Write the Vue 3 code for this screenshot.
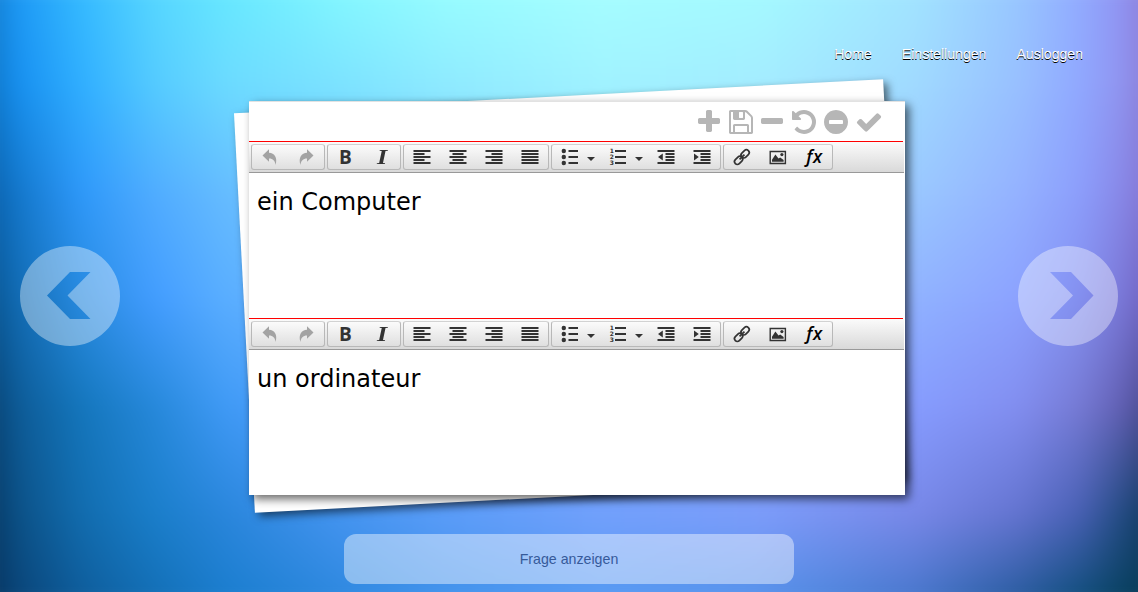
<script setup>
const stops = [0, 40, 100, 170, 240, 350, 450, 600, 750, 900, 1000, 1060, 1100, 1138]
const mesh = [
  [0, '#0f74c4 #1f9cf8 #36bcff #56d8ff #66eaff #84faff #98ffff #a6ffff #a4fcff #a2e6ff #98c8ff #92acff #9094f4 #8c74cc'],
  [100, '#096cb8 #1890f0 #30aeff #54caff #6cdaff #7ce2ff #8eeaff #a0f2ff #a4ecff #a0daff #98c0ff #90a8ff #9094f0 #8874cc'],
  [200, '#0658a0 #1478cc #2e98fa #50acff #66bcff #74c8ff #84d0ff #94d8ff #9cd8ff #9ac8ff #94b2ff #8c9efc #8888e8 #806cc8'],
  [300, '#054c84 #126cb4 #288adf #429cff #5aaeff #66b0ff #74b8ff #84c0ff #90c0ff #90b2ff #8ca2ff #8490f0 #7a78d8 #6858b4'],
  [400, '#053864 #0e5c98 #1476bc #2688da #409af6 #54a0ff #64a4ff #78a8ff #84a8ff #869cff #828ef0 #767ad4 #6260b4 #3c407c'],
  [500, '#053058 #0c5288 #126cae #1a7eca #2a86dc #4494f0 #5a9cf8 #72a0fc #7c9cfa #7888e8 #6474d0 #4860b4 #244c84 #0a3454'],
  [592, '#062c54 #0a4478 #0e5a98 #126cb2 #187ccc #2a86dc #3c90e8 #5098f0 #5090e8 #4074c8 #205898 #084c74 #04405c #043850'],
]
const layers = mesh.map(([y, colors], i) => {
  const list = colors.split(' ').map((c, k) => `${c} ${stops[k]}px`).join(', ')
  const style = { backgroundImage: `linear-gradient(to right, ${list})` }
  if (i > 0) style.maskImage = `linear-gradient(to bottom, transparent ${mesh[i - 1][0]}px, #000 ${y}px)`
  return style
})

const actions = [
  { name: 'Neu', d: 'M1600 736v192q0 40-28 68t-68 28h-416v416q0 40-28 68t-68 28h-192q-40 0-68-28t-28-68v-416h-416q-40 0-68-28t-28-68v-192q0-40 28-68t68-28h416v-416q0-40 28-68t68-28h192q40 0 68 28t28 68v416h416q40 0 68 28t28 68z' },
  { name: 'Speichern', d: 'M512 1536h768v-384h-768v384zm896 0h128v-896q0-14-10-38.5t-20-34.5l-281-281q-10-10-34-20t-39-10v416q0 40-28 68t-68 28h-576q-40 0-68-28t-28-68v-416h-128v1280h128v-416q0-40 28-68t68-28h832q40 0 68 28t28 68v416zm-384-928v-320q0-13-9.500-22.500t-22.500-9.500h-192q-13 0-22.500 9.500t-9.500 22.500v320q0 13 9.500 22.500t22.500 9.500h192q13 0 22.500-9.500t9.500-22.500zm640 32v928q0 40-28 68t-68 28h-1344q-40 0-68-28t-28-68v-1344q0-40 28-68t68-28h928q40 0 88 20t76 48l280 280q28 28 48 76t20 88z' },
  { name: 'Entfernen', d: 'M1600 736v192q0 40-28 68t-68 28h-1216q-40 0-68-28t-28-68v-192q0-40 28-68t68-28h1216q40 0 68 28t28 68z' },
  { name: 'Zurücksetzen', d: 'M1664 896q0 156-61 298t-164 245-245 164-298 61q-172 0-327-72.500t-264-204.500q-7-10-6.500-22.500t8.500-20.500l137-138q10-9 25-9 16 2 23 12 73 95 179 147t225 52q104 0 198.500-40.500t163.500-109.500 109.500-163.500 40.500-198.500-40.500-198.500-109.500-163.500-163.500-109.500-198.500-40.500q-98 0-188 35.500t-160 101.500l137 138q31 30 14 69-17 40-59 40h-448q-26 0-45-19t-19-45v-448q0-42 40-59 39-17 69 14l130 129q107-101 244.500-156.500t284.500-55.500q156 0 298 61t245 164 164 245 61 298z' },
  { name: 'Sperren', d: 'M1344 960v-128q0-26-19-45t-45-19h-768q-26 0-45 19t-19 45v128q0 26 19 45t45 19h768q26 0 45-19t19-45zm320-64q0 209-103 385.500t-279.500 279.500-385.500 103-385.500-103-279.500-279.500-103-385.500 103-385.500 279.500-279.500 385.500-103 385.500 103 279.500 279.500 103 385.500z' },
  { name: 'Fertig', d: 'M1671 566q0 40-28 68l-724 724-136 136q-28 28-68 28t-68-28l-136-136-362-362q-28-28-28-68t28-68l136-136q28-28 68-28t68 28l294 295 656-657q28-28 68-28t68 28l136 136q28 28 28 68z' },
]

const arrow = 'M1.500 6.500 8 .3V3.800C13.500 4.100 16.800 8.500 14.600 16 14 11.800 12 9.600 8 9.600V12.700Z'
const groups = [
  [{ id: 'undo', d: arrow, off: true }, { id: 'redo', d: arrow, off: true, flip: true }],
  [{ id: 'bold', text: 'B' }, { id: 'italic', text: 'I' }],
  [
    { id: 'left', d: 'M.5 1h17v2H.5zM.5 4h11v2H.5zM.5 7h17v2H.5zM.5 10h11v2H.5zM.5 13h17v2H.5z' },
    { id: 'center', d: 'M.5 1h17v2H.5zM3.500 4h11v2h-11zM.5 7h17v2H.5zM3.500 10h11v2h-11zM.5 13h17v2H.5z' },
    { id: 'right', d: 'M.5 1h17v2H.5zM6.500 4h11v2h-11zM.5 7h17v2H.5zM6.500 10h11v2h-11zM.5 13h17v2H.5z' },
    { id: 'justify', d: 'M.5 1h17v2H.5zM.5 4h17v2H.5zM.5 7h17v2H.5zM.5 10h17v2H.5zM.5 13h17v2H.5z' },
  ],
  [
    { id: 'ul', d: 'M7.500 1h9.500v2H7.500zM7.500 7h9.500v2H7.500zM7.500 13h9.500v2H7.500zM.6 2a2.200 2.200 0 1 0 4.400 0a2.200 2.200 0 1 0-4.400 0M.6 8a2.200 2.200 0 1 0 4.400 0a2.200 2.200 0 1 0-4.400 0M.6 14a2.200 2.200 0 1 0 4.400 0a2.200 2.200 0 1 0-4.400 0', menu: true },
    { id: 'ol', d: 'M6 1h11v2H6zM6 7h11v2H6zM6 13h11v2H6z', menu: true },
    { id: 'outdent', d: 'M.5 1h17v2H.5zM8.500 4h9v2h-9zM8.500 7h9v2h-9zM8.500 10h9v2h-9zM.5 13h17v2H.5zM1 8l4.800-3.500v7z' },
    { id: 'indent', d: 'M.5 1h17v2H.5zM7.500 4h10v2h-10zM7.500 7h10v2h-10zM7.500 10h10v2h-10zM.5 13h17v2H.5zM5.800 8 1 4.500v7z' },
  ],
  [{ id: 'link' }, { id: 'image' }, { id: 'formula', text: 'fx' }],
]
const editors = ['ein Computer', 'un ordinateur']
</script>

<template>
  <div class="page">
    <div class="backdrop">
      <div v-for="(layer, i) in layers" :key="i" class="layer" :style="layer"></div>
    </div>

    <nav class="nav">
      <a>Home</a><a>Einstellungen</a><a>Ausloggen</a>
    </nav>

    <main class="stage">
      <svg class="turn" viewBox="0 0 100 100">
        <path fill-rule="evenodd" d="M50 0a50 50 0 1 0 0 100a50 50 0 1 0 0-100zM50 26h20.500L47.500 49.500 70.500 73H50L27 49.500z" />
      </svg>

      <section class="card">
        <div class="sheet"></div>
        <div class="face">
          <header class="actions">
            <svg v-for="a in actions" :key="a.name" viewBox="0 0 1792 1792" :aria-label="a.name"><path :d="a.d" /></svg>
          </header>
          <div v-for="t in editors" :key="t" class="editor">
            <div class="toolbar">
              <div v-for="(g, i) in groups" :key="i" class="group">
                <div v-for="b in g" :key="b.id" class="btn" :class="{ off: b.off, menu: b.menu }">
                  <span v-if="b.text" :class="['letter', b.id]">{{ b.text }}</span>
                  <svg v-else-if="b.id === 'link'" class="icon" viewBox="0 0 18 16">
                    <g fill="none" stroke="#333" stroke-width="1.700" transform="rotate(-45 9 8)">
                      <rect x="-.4" y="5.200" width="9.200" height="5.600" rx="2.800" />
                      <rect x="8.800" y="5.200" width="9.200" height="5.600" rx="2.800" />
                      <path d="M5.500 8h7" />
                    </g>
                  </svg>
                  <svg v-else-if="b.id === 'image'" class="icon" viewBox="0 0 18 16">
                    <path fill="none" stroke="#333" stroke-width="1.400" d="M1.200 2.500h15.200v12H1.200z" />
                    <path d="M3 12.700V10.800L6.400 5.400l3.100 4.200 1.700-1.200 3.400 2.600v1.700z" />
                    <circle cx="12.900" cy="5.600" r="1.600" />
                  </svg>
                  <svg v-else class="icon" :class="{ flip: b.flip }" viewBox="0 0 18 16">
                    <path :d="b.d" />
                    <text v-if="b.id === 'ol'" class="digits"><tspan x=".8" y="4.200">1</tspan><tspan x=".8" y="10.300">2</tspan><tspan x=".8" y="16.400">3</tspan></text>
                  </svg>
                  <i v-if="b.menu" class="caret"></i>
                </div>
              </div>
            </div>
            <p class="content">{{ t }}</p>
          </div>
        </div>
      </section>

      <svg class="turn next" viewBox="0 0 100 100">
        <path fill-rule="evenodd" d="M50 0a50 50 0 1 0 0 100a50 50 0 1 0 0-100zM32 26h21L75.500 49.500 53 73H32L55 49.500z" />
      </svg>
    </main>

    <button class="reveal">Frage anzeigen</button>
  </div>
</template>

<style>
body { margin: 0; overflow: hidden; }
</style>

<style scoped>
.page {
  position: relative;
  isolation: isolate;
  display: flex;
  flex-direction: column;
  width: 1138px;
  height: 592px;
  overflow: hidden;
  box-sizing: border-box;
  font-family: "Liberation Sans", Arial, sans-serif;
}
.backdrop, .layer { position: absolute; inset: 0; }
.backdrop { z-index: -1; filter: blur(10px); transform: scale(1.04, 1.07); }
.nav {
  display: flex;
  justify-content: flex-end;
  gap: 30px;
  height: 55px;
  padding: 46px 55px 0 0;
  box-sizing: border-box;
  font-size: 14.100px;
  line-height: 16px;
  color: #fff;
  text-shadow: 0 1px 0 #000;
}
.stage {
  display: flex;
  justify-content: space-between;
  padding: 46px 20px 0;
  height: 433px;
  box-sizing: border-box;
}
.turn {
  width: 100px;
  height: 100px;
  margin-top: 145px;
  fill: rgba(255, 255, 255, .38);
}
.card {
  position: relative;
  width: 656px;
  height: 394px;
  margin-left: 16px;
}
.sheet {
  position: absolute;
  left: -5px;
  top: -5px;
  width: 650px;
  height: 400px;
  background: #fff;
  transform: rotate(-3deg);
  box-shadow: 4px 4px 8px rgba(0, 0, 0, .55);
}
.face {
  position: relative;
  height: 394px;
  background: #fff;
  box-shadow: inset 0 1px 0 #e2e2e2, 4px 4px 9px rgba(0, 0, 0, .6);
}
.actions {
  display: flex;
  justify-content: flex-end;
  height: 40px;
  padding: 7px 22px 0 0;
  box-sizing: border-box;
}
.actions svg { width: 28px; height: 28px; margin-right: 4px; fill: #b6b6b6; }
.actions svg:nth-child(2) { margin-right: 3px; }
.actions svg:nth-child(4) { margin-right: 4px; }
.actions svg:nth-child(5) { margin-right: 5px; }
.actions svg:last-child { margin-right: 0; }
.editor {
  height: 177px;
  box-sizing: border-box;
}
.toolbar {
  display: flex;
  gap: 2px;
  height: 32px;
  margin-right: 1px;
  padding: 3px 2px 0;
  box-sizing: border-box;
  border-bottom: 1px solid #999;
  background: linear-gradient(#f00, #f00) 0 0 / 654px 1px no-repeat, linear-gradient(#fcfcfc, #d9d9d9);
}
.group {
  display: flex;
  height: 26px;
  box-sizing: border-box;
  border: 1px solid #b8b8b8;
  border-top-color: #d2d2d2;
  border-radius: 3px;
  background: linear-gradient(#fbfbfb, #dfdfdf);
}
.btn {
  display: flex;
  align-items: center;
  justify-content: center;
  width: 36px;
}
.btn.menu { width: 48px; gap: 8px; justify-content: flex-start; padding-left: 9px; box-sizing: border-box; }
.icon { width: 18px; height: 16px; fill: #333; overflow: visible; }
.off .icon { fill: #a3a3a3; }
.flip { transform: scaleX(-1); }
.digits { font: bold 6px "DejaVu Sans", sans-serif; }
.caret {
  border: 4px solid transparent;
  border-top-color: #333;
  border-bottom: 0;
  margin-top: 3px;
}
.letter { color: #333; }
.bold { font: bold 19px/22px "Open Sans", sans-serif; margin: -1px 1px 0 0; }
.italic { font: italic bold 21px/24px "Liberation Serif", serif; transform: scaleX(1.25); }
.formula { font: italic 600 18px/20px "Open Sans", sans-serif; letter-spacing: .5px; color: #000; margin: -2px 0 0 1px; }
.content {
  margin: 0;
  padding: 14px 8px 0;
  font: 24px/30px "DejaVu Sans", sans-serif;
  color: #000;
}
.reveal {
  align-self: center;
  width: 450px;
  height: 50px;
  margin-top: 46px;
  border: 0;
  border-radius: 12px;
  background: rgba(255, 255, 255, .43);
  font: 14.200px "Liberation Sans", Arial, sans-serif;
  color: #365a9a;
}
</style>
